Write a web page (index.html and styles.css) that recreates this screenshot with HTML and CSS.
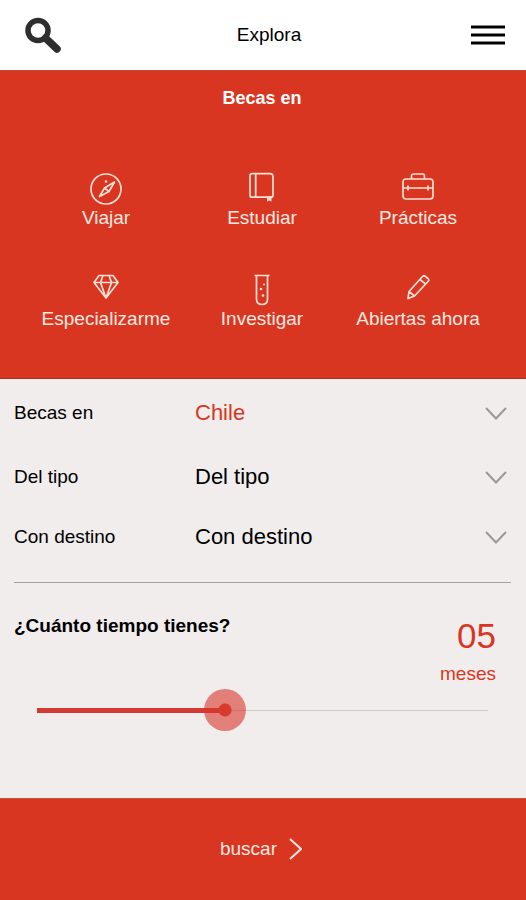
FILE: index.html
```html
<!DOCTYPE html>
<html lang="es">
<head>
<meta charset="utf-8">
<meta name="viewport" content="width=device-width, initial-scale=1">
<title>Explora</title>
<link rel="stylesheet" href="styles.css">
</head>
<body>
<header class="topbar">
  <button class="icon-button search" type="button" aria-label="Buscar">
    <svg width="36" height="36" viewBox="0 0 36 36" fill="none" stroke="#2e2e2e">
      <circle cx="13" cy="13.500" r="10" stroke-width="5.500"/>
      <path d="M20.500 21 32 32" stroke-width="7.500" stroke-linecap="round"/>
    </svg>
  </button>
  <h1 class="topbar-title">Explora</h1>
  <button class="icon-button" type="button" aria-label="Menú">
    <svg width="34" height="20" viewBox="0 0 34 20" fill="#000">
      <path d="M0 .500h34v3H0zM0 8.500h34v3H0zM0 16.500h34v3H0z"/>
    </svg>
  </button>
</header>

<main>
  <section class="hero">
    <h2 class="hero-title">Becas en</h2>
    <nav class="categories">
      <a class="category" href="#viajar">
        <svg class="category-icon" viewBox="0 0 36 36">
          <circle cx="18" cy="19" r="15"/>
          <path d="M26.500 12 21 21.500 11.500 26.500 16.500 18zM16.500 18l4.500 3.500"/>
          <circle class="dot" cx="18" cy="11.500" r="1.300"/>
        </svg>
        Viajar
      </a>
      <a class="category" href="#estudiar">
        <svg class="category-icon" viewBox="0 0 36 36">
          <path d="M8 3.700h18q3 0 3 3v18.500q0 2-2 2H8q-2 0-2-2v-19.500q0-2 2-2M11.700 3.700v23.500"/>
          <path class="dot" d="M23 26.500h4.500v5l-2.200-1-2.300 1z"/>
        </svg>
        Estudiar
      </a>
      <a class="category" href="#practicas">
        <svg class="category-icon" viewBox="0 0 36 36">
          <rect x="3" y="9" width="30" height="20" rx="3"/>
          <path d="M11.500 9V6q0-2 2-2h9q2 0 2 2v3M3 18h4.500M8.500 18h19M28.500 18H33M8 15.500v5M28 15.500v5"/>
        </svg>
        Prácticas
      </a>
      <a class="category" href="#especializarme">
        <svg class="category-icon" viewBox="0 0 36 36">
          <path d="M11 4.500h14l5 7-12 15.500L6 11.500zM6 11.500h24M15 4.500l-2.500 7L18 27l5.500-15.500-2.500-7"/>
        </svg>
        Especializarme
      </a>
      <a class="category" href="#investigar">
        <svg class="category-icon" viewBox="0 0 36 36">
          <path d="M10.500 4.500h15M12.500 4.500V28q0 5.500 5.500 5.500t5.500-5.500V4.500"/>
          <g class="dot"><circle cx="17" cy="18" r="1.300"/><circle cx="20" cy="13.500" r="1"/><circle cx="19" cy="24.500" r="1.300"/></g>
        </svg>
        Investigar
      </a>
      <a class="category" href="#abiertas">
        <svg class="category-icon" viewBox="0 0 36 36">
          <path d="M8 27.500 9 20.500 22.500 5.500q1.500-1.500 3 0l2.500 2q1.500 1.500 0 3L14.500 25zM9 20.500l5.500 4.500M20 8.500l5.500 4.500"/>
        </svg>
        Abiertas ahora
      </a>
    </nav>
  </section>

  <form class="search-form" id="busqueda">
    <div class="field">
      <label for="pais">Becas en</label>
      <div class="select">
        <select class="selected" id="pais"><option>Chile</option></select>
        <svg class="chevron" width="22" height="13" viewBox="0 0 22 13"><path d="M1 1l10 10.500L21 1"/></svg>
      </div>
    </div>
    <div class="field">
      <label for="tipo">Del tipo</label>
      <div class="select">
        <select id="tipo"><option>Del tipo</option></select>
        <svg class="chevron" width="22" height="13" viewBox="0 0 22 13"><path d="M1 1l10 10.500L21 1"/></svg>
      </div>
    </div>
    <div class="field">
      <label for="destino">Con destino</label>
      <div class="select">
        <select id="destino"><option>Con destino</option></select>
        <svg class="chevron" width="22" height="13" viewBox="0 0 22 13"><path d="M1 1l10 10.500L21 1"/></svg>
      </div>
    </div>
    <div class="duration">
      <label class="duration-label" for="meses">¿Cuánto tiempo tienes?</label>
      <output class="duration-value" for="meses"><span class="number">05</span><span>meses</span></output>
    </div>
    <input class="slider" id="meses" type="range" min="0" max="12" value="5" style="--fraction: calc(5 / 12)">
  </form>
</main>

<button class="submit" type="submit" form="busqueda">
  buscar
  <svg width="13" height="22" viewBox="0 0 13 22"><path d="M1 1l11 10L1 21"/></svg>
</button>
</body>
</html>
```
FILE: styles.css
```css
* {
  box-sizing: border-box;
}

body {
  --red: #d93622;
  --paper: #f0edec;
  display: flex;
  flex-direction: column;
  min-height: 100vh;
  margin: 0;
  background: var(--paper);
  color: #000;
  font: 19px/22px "Liberation Sans", Arial, sans-serif;
}

main {
  display: flex;
  flex: 1;
  flex-direction: column;
}

button,
select {
  border: 0;
  background: none;
  color: inherit;
  font: inherit;
}

.topbar {
  display: flex;
  align-items: center;
  justify-content: space-between;
  height: 70px;
  padding: 0 21px 0 25px;
  background: #fff;
}

.topbar-title {
  margin: 0;
  font-size: 19px;
  font-weight: 400;
}

.icon-button {
  display: flex;
  padding: 0;
}

.search {
  width: 42px;
}

.hero {
  padding: 16px 30px 48px 28px;
  border-top: 1px solid #c9452f;
  border-bottom: 1px solid #a8301c;
  background: var(--red);
  color: #fff;
}

.hero-title {
  margin: 0 0 61px;
  font-size: 18px;
  line-height: 22px;
  text-align: center;
}

.categories {
  display: grid;
  grid-template-columns: repeat(3, 1fr);
  row-gap: 42px;
}

.category {
  display: flex;
  flex-direction: column;
  align-items: center;
  gap: 1px;
  color: #ffe9e0;
  text-decoration: none;
  white-space: nowrap;
}

.category-icon {
  width: 36px;
  height: 36px;
  fill: none;
  stroke: #ffe0d4;
  stroke-width: 1.7;
  stroke-linejoin: round;
}

.category-icon .dot {
  fill: #ffe0d4;
  stroke: none;
}

.search-form {
  padding: 4px 15px 48px 14px;
}

.field {
  display: grid;
  grid-template-columns: 181px 1fr;
  align-items: center;
  height: 60px;
}

.field:first-child {
  margin-bottom: 4px;
}

.select {
  display: grid;
  align-items: center;
}

.select > * {
  grid-area: 1 / 1;
}

.select select {
  width: 100%;
  height: 40px;
  padding: 0;
  appearance: none;
  font-size: 22px;
}

.select .selected {
  color: var(--red);
}

.chevron {
  justify-self: end;
  margin-right: 4px;
  fill: none;
  stroke: #999;
  stroke-width: 2;
  pointer-events: none;
}

.duration {
  display: flex;
  align-items: flex-start;
  justify-content: space-between;
  margin-top: 15px;
  padding: 32px 15px 4px 0;
  border-top: 1px solid #a5a2a1;
}

.duration-label {
  font-weight: 700;
}

.duration-value {
  display: flex;
  flex-direction: column;
  align-items: flex-end;
  gap: 6px;
  color: var(--red);
}

.number {
  font-size: 35px;
  line-height: 42px;
}

.slider {
  display: block;
  width: calc(100% - 4px);
  height: 42px;
  margin: 0 2px;
  appearance: none;
  background: none;
}

.slider::-webkit-slider-runnable-track {
  height: 42px;
  background:
    linear-gradient(#d13a30, #d13a30) 21px center / calc((100% - 42px) * var(--fraction)) 5px no-repeat,
    linear-gradient(#cfcccb, #cfcccb) 21px center / calc(100% - 42px) 1px no-repeat;
}

.slider::-webkit-slider-thumb {
  width: 42px;
  height: 42px;
  appearance: none;
  border-radius: 50%;
  background: radial-gradient(circle, #d93a2e 6px, rgba(217, 54, 44, 0.6) 7px);
}

.submit {
  display: flex;
  align-items: center;
  justify-content: center;
  gap: 12px;
  height: 102px;
  padding: 0 4px 1px 0;
  border-top: 1px solid #c4503f;
  background: var(--red);
  color: #ffe9e0;
}

.submit svg {
  fill: none;
  stroke: #ffe9e0;
  stroke-width: 2;
}
```
